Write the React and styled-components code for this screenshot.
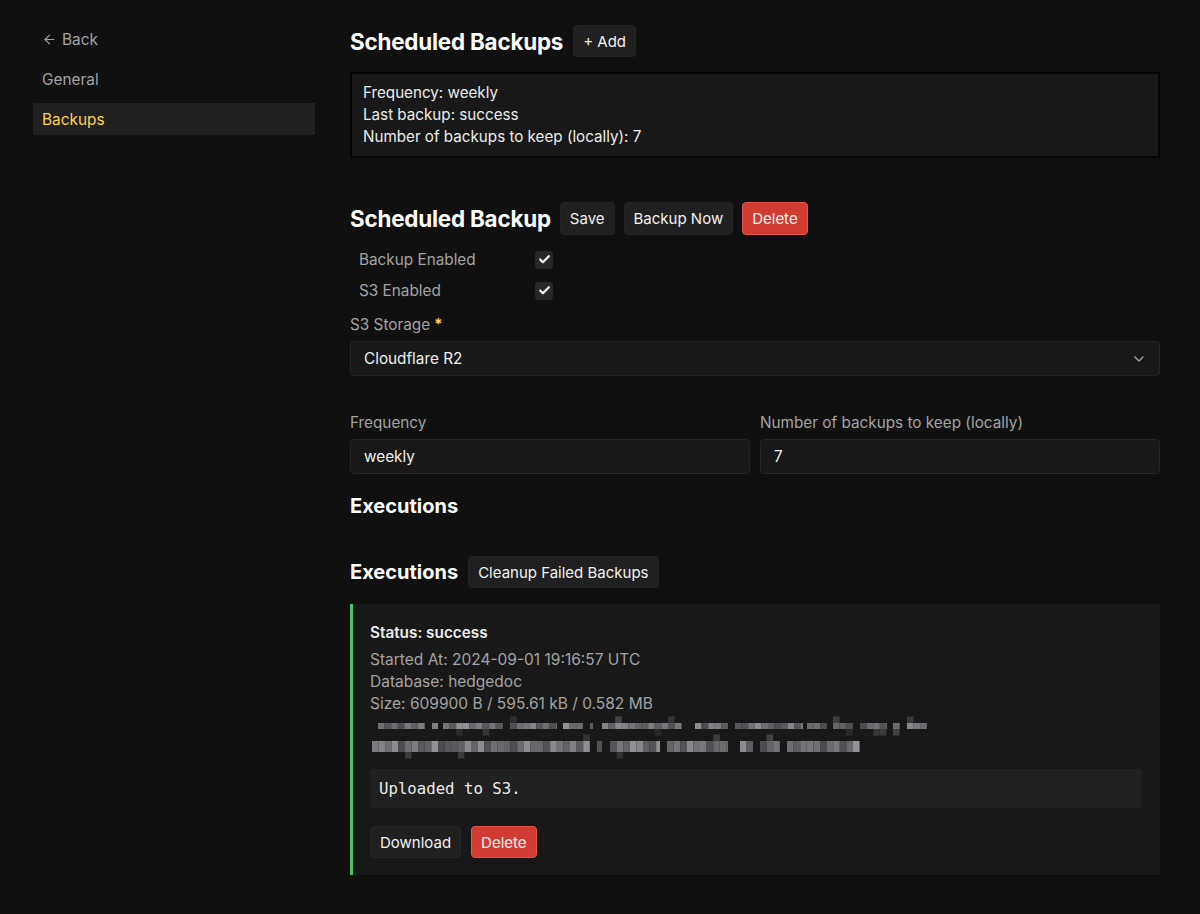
import React from 'react';
import styled, { createGlobalStyle } from 'styled-components';
import { ArrowLeft, ChevronDown, Check } from 'lucide-react';

const GlobalStyle = createGlobalStyle`
  html, body {
    margin: 0;
    padding: 0;
    background: #101010;
  }
  body {
    font-family: Inter, "Noto Sans", sans-serif;
    color: #e5e5e5;
    -webkit-font-smoothing: antialiased;
  }
`;

const Page = styled.div`
  display: flex;
  flex-direction: row;
  align-items: flex-start;
  min-height: 914px;
  padding: 23px 40px 30px 33px;
  box-sizing: border-box;
  gap: 35px;
`;

const Sidebar = styled.nav`
  width: 282px;
  flex-shrink: 0;
  display: flex;
  flex-direction: column;
  gap: 8px;
`;

const NavItem = styled.a`
  display: flex;
  align-items: center;
  gap: 5px;
  height: 32px;
  padding: 0 9px;
  font-size: 15.4px;
  color: ${p => (p.$active ? '#fcd452' : '#a3a3a3')};
  background: ${p => (p.$active ? '#202020' : 'transparent')};
  text-decoration: none;
  cursor: pointer;
`;

const Main = styled.main`
  flex: 1;
  display: flex;
  flex-direction: column;
  min-width: 0;
`;

const TitleRow = styled.div`
  display: flex;
  align-items: center;
  gap: ${p => p.$gap || 10}px;
  margin-top: ${p => p.$top || 0}px;
`;

const H2 = styled.h2`
  margin: 0;
  font-size: 22.4px;
  font-weight: 700;
  color: #ffffff;
  letter-spacing: -0.2px;
`;

const H3 = styled.h3`
  margin: ${p => p.$top || 0}px 0 0;
  font-size: 20px;
  line-height: 28px;
  font-weight: 700;
  color: #ffffff;
`;

const Button = styled.button`
  height: ${p => p.$h || 32}px;
  padding: 0 9px;
  border-radius: 4px;
  border: 1px solid ${p => (p.$danger ? '#e0574d' : '#242424')};
  background: ${p => (p.$danger ? '#d03c31' : '#202020')};
  color: #f2f2f2;
  font-family: Inter, sans-serif;
  font-size: 15px;
  cursor: pointer;
`;

const SummaryBox = styled.div`
  margin-top: 15px;
  background: #181818;
  border: 2px solid #050505;
  padding: 8px 11px;
  font-size: 15.2px;
  line-height: 22px;
  color: #ececec;
`;

const CheckRow = styled.label`
  display: flex;
  align-items: center;
  height: 31px;
  padding-left: 9px;
  margin-top: ${p => p.$top || 0}px;
  font-size: 15.3px;
  color: #a3a3a3;
`;

const CheckLabel = styled.span`
  width: 176px;
`;

const CheckBox = styled.span`
  width: 18px;
  height: 18px;
  border-radius: 4px;
  background: #282828;
  display: flex;
  align-items: center;
  justify-content: center;
  color: #ffffff;
`;

const FieldLabel = styled.div`
  font-size: 15.3px;
  line-height: 20px;
  color: #a3a3a3;
  margin-bottom: 6px;
`;

const Required = styled.span`
  color: #fcd452;
  margin-left: 4px;
  font-weight: 700;
`;

const Field = styled.div`
  display: flex;
  flex-direction: column;
  margin-top: ${p => p.$top || 0}px;
`;

const FieldGrid = styled.div`
  display: grid;
  grid-template-columns: 1fr 1fr;
  gap: 10px;
  margin-top: 37px;
`;

const InputBox = styled.div`
  height: 35px;
  box-sizing: border-box;
  display: flex;
  align-items: center;
  justify-content: space-between;
  padding: 0 12px 0 13px;
  background: #181818;
  border: 1px solid #252525;
  border-radius: 4px;
  font-size: 15.3px;
  color: #f0f0f0;
`;

const Card = styled.div`
  margin-top: 16px;
  background: #181818;
  border-left: 3px solid #4ac26b;
  padding: 18px 18px 17px 17px;
  display: flex;
  flex-direction: column;
`;

const Status = styled.div`
  font-size: 15.3px;
  line-height: 22px;
  font-weight: 600;
  color: #ececec;
  margin-bottom: 5px;
`;

const Detail = styled.div`
  font-size: 15.5px;
  line-height: 22px;
  color: #a3a3a3;
`;

const Blurred = styled.svg`
  display: block;
`;

const LogBox = styled.pre`
  margin: 10px 0 0;
  height: 39px;
  box-sizing: border-box;
  display: flex;
  align-items: center;
  padding: 0 9px;
  background: #202020;
  border-radius: 4px;
  font-family: "DejaVu Sans Mono", "Liberation Mono", monospace;
  font-size: 15.7px;
  color: #ececec;
`;

const Actions = styled.div`
  display: flex;
  gap: 10px;
  margin-top: 18px;
`;

// blurred (redacted) log lines: [start, end] x ranges relative to card content
const row1 = [[8, 55], [62, 68], [73, 133], [140, 187], [193, 213], [220, 223], [232, 312], [325, 358], [365, 433], [437, 457], [463, 483], [490, 517], [523, 530], [537, 557]];
const row2 = [[2, 220], [227, 232], [240, 290], [297, 358], [370, 383], [390, 410], [417, 490]];

function seeded(seed) {
  let s = seed;
  return () => {
    s = (s * 9301 + 49297) % 233280;
    return s / 233280;
  };
}

function PixelRows() {
  const rnd = seeded(7);
  const cells = [];
  const cw = 6.6;
  const build = (segments, y, h) => {
    segments.forEach(([a, b]) => {
      for (let x = a; x < b; x += cw) {
        const v = Math.floor(75 + rnd() * 75);
        cells.push({ x, y, w: Math.min(cw, b - x), h, c: `rgb(${v},${v},${v + 4})` });
        if (rnd() > 0.88) {
          const d = Math.floor(40 + rnd() * 30);
          cells.push({ x, y: rnd() > 0.5 ? y - cw : y + h, w: cw, h: cw, c: `rgb(${d},${d},${d})` });
        }
      }
    });
  };
  build(row1, 8, 6);
  build(row2, 26, 11);
  return (
    <Blurred width="600" height="44" viewBox="0 0 600 44">
      {cells.map((c, i) => (
        <rect key={i} x={c.x} y={c.y} width={c.w} height={c.h} fill={c.c} />
      ))}
    </Blurred>
  );
}

export default function App() {
  return (
    <>
      <GlobalStyle />
      <Page>
        <Sidebar>
          <NavItem>
            <ArrowLeft size={15} strokeWidth={1.8} />
            Back
          </NavItem>
          <NavItem>General</NavItem>
          <NavItem $active>Backups</NavItem>
        </Sidebar>
        <Main>
          <TitleRow $top={2}>
            <H2>Scheduled Backups</H2>
            <Button>+ Add</Button>
          </TitleRow>
          <SummaryBox>
            <div>Frequency: weekly</div>
            <div>Last backup: success</div>
            <div>Number of backups to keep (locally): 7</div>
          </SummaryBox>

          <TitleRow $top={44} $gap={9}>
            <H2>Scheduled Backup</H2>
            <Button $h={33}>Save</Button>
            <Button $h={33}>Backup Now</Button>
            <Button $h={33} $danger>Delete</Button>
          </TitleRow>
          <CheckRow $top={9}>
            <CheckLabel>Backup Enabled</CheckLabel>
            <CheckBox><Check size={13} strokeWidth={4} /></CheckBox>
          </CheckRow>
          <CheckRow>
            <CheckLabel>S3 Enabled</CheckLabel>
            <CheckBox><Check size={13} strokeWidth={4} /></CheckBox>
          </CheckRow>
          <Field $top={9}>
            <FieldLabel>
              S3 Storage<Required>*</Required>
            </FieldLabel>
            <InputBox>
              Cloudflare R2
              <ChevronDown size={16} color="#9ca3af" strokeWidth={2} />
            </InputBox>
          </Field>
          <FieldGrid>
            <Field>
              <FieldLabel>Frequency</FieldLabel>
              <InputBox>weekly</InputBox>
            </Field>
            <Field>
              <FieldLabel>Number of backups to keep (locally)</FieldLabel>
              <InputBox>7</InputBox>
            </Field>
          </FieldGrid>

          <H3 $top={18}>Executions</H3>

          <TitleRow $top={36}>
            <H3>Executions</H3>
            <Button>Cleanup Failed Backups</Button>
          </TitleRow>
          <Card>
            <Status>Status: success</Status>
            <Detail>Started At: 2024-09-01 19:16:57 UTC</Detail>
            <Detail>Database: hedgedoc</Detail>
            <Detail>Size: 609900 B / 595.61 kB / 0.582 MB</Detail>
            <PixelRows />
            <LogBox>Uploaded to S3.</LogBox>
            <Actions>
              <Button>Download</Button>
              <Button $danger>Delete</Button>
            </Actions>
          </Card>
        </Main>
      </Page>
    </>
  );
}
